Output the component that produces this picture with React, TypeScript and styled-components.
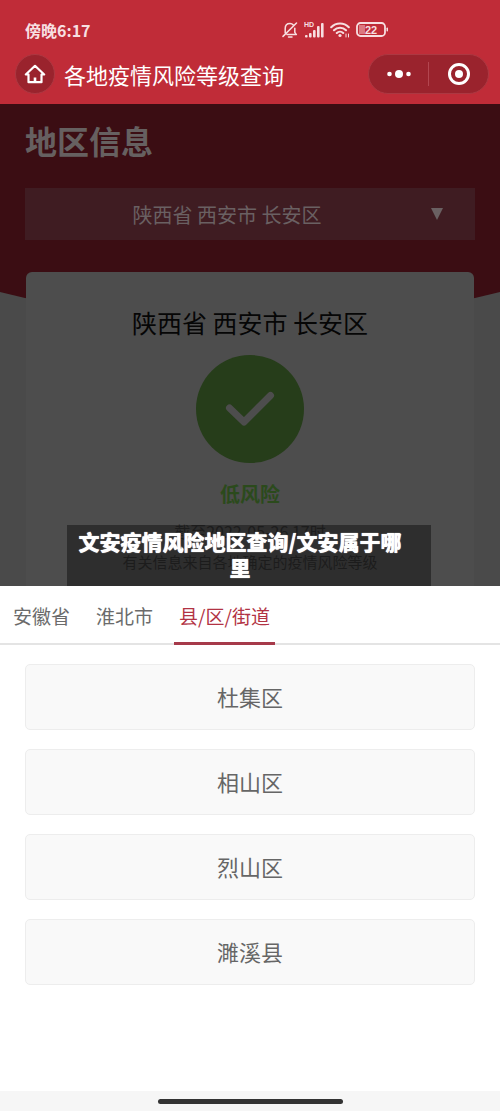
import React, { useState } from "react";
import styled, { createGlobalStyle, css } from "styled-components";

const GlobalStyle = createGlobalStyle`
  *, *::before, *::after { box-sizing: border-box; }
  body {
    margin: 0;
    font-family: "Noto Sans CJK SC", "Noto Sans", sans-serif;
    background: #ffffff;
  }
  h1, h2, p { margin: 0; font-weight: 400; }
  button, select { font-family: inherit; border: 0; padding: 0; cursor: pointer; }
  svg { display: block; flex: none; }
`;

const Page = styled.div`
  display: flex;
  flex-direction: column;
  min-height: 100vh;
`;

const Header = styled.header`
  background: #c02c38;
  color: #ffffff;
  padding: 16px 11px 10px 15px;
  display: flex;
  flex-direction: column;
  gap: 10px;
`;

const StatusBar = styled.div`
  display: flex;
  align-items: center;
  height: 28px;
  padding-left: 10px;
  padding-right: 100px;
  color: #f7dfe1;
`;

const Clock = styled.span`
  flex: 1;
  font-size: 16px;
  font-weight: 700;
  line-height: 28px;
`;

const StatusIcons = styled.div`
  display: flex;
  align-items: center;
  gap: 6px;
`;

const NavBar = styled.div`
  display: flex;
  align-items: center;
  height: 40px;
`;

const round = css`
  background: #9a232d;
  border: 1px solid #ac3842;
  color: #ffffff;
`;

const HomeButton = styled.button`
  ${round}
  width: 40px;
  height: 40px;
  border-radius: 50%;
  display: grid;
  place-items: center;
`;

const NavTitle = styled.h1`
  flex: 1;
  padding-left: 9px;
  font-size: 22px;
  line-height: 38px;
`;

const Capsule = styled.div`
  ${round}
  display: flex;
  align-items: center;
  width: 121px;
  height: 40px;
  border-radius: 20px;
`;

const CapsuleButton = styled.button`
  flex: 1;
  height: 38px;
  background: transparent;
  color: inherit;
  display: grid;
  place-items: center;
`;

const CapsuleDivider = styled.span`
  width: 1px;
  height: 24px;
  background: #b34650;
`;

const Region = styled.section`
  position: relative;
  isolation: isolate;
  background: #4a4a4a;
  padding: 14px 25px 0;
  overflow: hidden;

  &::before {
    content: "";
    position: absolute;
    z-index: -1;
    inset: 0 0 auto;
    height: 210px;
    background: #3b0d13;
    clip-path: polygon(0 0, 100% 0, 100% 188px, 95% 194px, 75% 206px, 25% 206px, 5% 194px, 0 188px);
  }
`;

const RegionTitle = styled.h2`
  font-size: 32px;
  font-weight: 700;
  line-height: 44px;
  color: #666060;
`;

const Picker = styled.label`
  display: grid;
  align-items: center;
  margin-top: 26px;
  background: #3f1c22;
  color: #6a6062;

  & > * {
    grid-area: 1 / 1;
  }
  & > svg {
    justify-self: end;
    margin-right: 32px;
    pointer-events: none;
  }
`;

const PickerSelect = styled.select`
  appearance: none;
  width: 100%;
  height: 52px;
  padding-right: 46px;
  background: transparent;
  color: inherit;
  font-size: 20px;
  text-align: center;
  text-align-last: center;
`;

const RiskCard = styled.article`
  display: flex;
  flex-direction: column;
  align-items: center;
  margin: 32px 1px 0;
  padding: 31px 16px 12px;
  border-radius: 6px 6px 0 0;
  background: #4d4d4d;
`;

const Place = styled.h2`
  font-size: 25px;
  line-height: 38px;
  color: #060606;
`;

const RiskBadge = styled.div`
  display: grid;
  place-items: center;
  width: 108px;
  height: 108px;
  margin: 14px 0 16px;
  border-radius: 50%;
  background: #263d1a;
`;

const RiskLevel = styled.p`
  font-size: 20px;
  font-weight: 700;
  line-height: 30px;
  color: #2b4a1c;
`;

const Note = styled.p<{ $size: number }>`
  font-size: ${(p) => p.$size}px;
  line-height: 24px;
  color: #303030;
  & + & { margin-top: 7px; }
`;

const Notes = styled.div`
  margin-top: 10px;
  text-align: center;
`;

const Caption = styled.p`
  position: absolute;
  left: 67px;
  right: 69px;
  bottom: 0;
  padding: 3px 23px 6px 5px;
  background: rgba(0, 0, 0, 0.4);
  color: #ffffff;
  font-size: 21px;
  font-weight: 900;
  line-height: 26px;
  text-align: center;
  text-shadow: 0 0 1px #ffffff;
`;

const Sheet = styled.section`
  flex: 1;
  display: flex;
  flex-direction: column;
  background: #ffffff;
`;

const Tabs = styled.div`
  display: flex;
  gap: 16px;
  height: 59px;
  padding-left: 8px;
  border-bottom: 2px solid #e4e4e4;
`;

const Tab = styled.button<{ $active: boolean }>`
  height: 59px;
  padding: 3px 5px 0;
  background: transparent;
  border-bottom: 3px solid ${(p) => (p.$active ? "#a63a4a" : "transparent")};
  color: ${(p) => (p.$active ? "#b23344" : "#6b6b6b")};
  font-size: 19px;
  line-height: 28px;
`;

const Districts = styled.div`
  flex: 1;
  display: flex;
  flex-direction: column;
  gap: 19px;
  padding: 19px 25px 24px;
`;

const District = styled.button`
  height: 66px;
  padding-bottom: 3px;
  border: 1px solid #ededed;
  border-radius: 5px;
  background: #f9f9f9;
  color: #666666;
  font-size: 22px;
`;

const HomeIndicator = styled.footer`
  display: flex;
  justify-content: center;
  align-items: center;
  height: 20px;
  background: #f6f6f6;

  &::before {
    content: "";
    width: 37%;
    height: 5px;
    border-radius: 3px;
    background: #333333;
  }
`;

const MutedBell = () => (
  <svg width="16" height="16" viewBox="0 0 16 16" fill="none" stroke="currentColor" strokeWidth="1.5" strokeLinecap="round" strokeLinejoin="round">
    <path d="M5 12.600h9.400l-1.600-2.200V6.200M3.200 11V6.600c0-3 2-5 4.800-5 1.400 0 2.500.5 3.300 1.400M6.500 15h3.500M1 14.400L14.500 1" />
  </svg>
);

const Signal = () => (
  <svg width="20" height="18" viewBox="0 0 20 18" fill="currentColor">
    <text x="0" y="6" fontSize="7" fontWeight="700" fontFamily="Liberation Sans, sans-serif">HD</text>
    <rect x="1" y="14" width="2.600" height="2.500" rx="1" />
    <rect x="5" y="12" width="2.600" height="4.500" rx="1" />
    <rect x="9" y="9" width="2.600" height="7.500" rx="1" />
    <rect x="13" y="5" width="2.600" height="11.500" rx="1" />
    <rect x="17" y="2" width="2.600" height="14.500" rx="1" />
  </svg>
);

const Wifi = () => (
  <svg width="20" height="16" viewBox="0 0 20 16" fill="none" stroke="currentColor" strokeWidth="2.100" strokeLinecap="round">
    <path d="M1.200 5.200c4.900-4.900 12.700-4.900 17.600 0M4 8.200c3.300-3.300 8.700-3.300 12 0M6.800 11c1.800-1.700 4.600-1.700 6.400 0" />
    <circle cx="10" cy="13.500" r="1.600" fill="currentColor" stroke="none" />
    <path d="M16 12v3M18.500 12v3" strokeWidth="1" />
  </svg>
);

const Battery = () => (
  <svg width="33" height="16" viewBox="0 0 33 16" fill="none">
    <rect x="3" y="3" width="6" height="9" fill="#dc7880" />
    <rect x="1" y="1" width="28" height="13" rx="3.500" stroke="currentColor" strokeWidth="1.800" />
    <rect x="30.500" y="5.500" width="1.500" height="4" rx=".7" fill="currentColor" />
    <text x="15" y="11.500" textAnchor="middle" fontSize="11" fontWeight="700" fill="currentColor" fontFamily="Liberation Sans, sans-serif">22</text>
  </svg>
);

const HomeIcon = () => (
  <svg width="22" height="20" viewBox="0 0 22 20" fill="none" stroke="currentColor" strokeWidth="2.200" strokeLinejoin="round" strokeLinecap="round">
    <path d="M4.500 10.500H1.800L11 1.800 20.200 10.500H17.500V18.200H4.500Z" />
    <path d="M11 13.500v4.500" strokeLinecap="butt" strokeWidth="2.600" />
  </svg>
);

const place = "陕西省 西安市 长安区";
const tabs = ["安徽省", "淮北市", "县/区/街道"];
const districts = ["杜集区", "相山区", "烈山区", "濉溪县"];

export default function App() {
  const [active, setActive] = useState(2);
  return (
    <Page>
      <GlobalStyle />
      <Header>
        <StatusBar>
          <Clock>傍晚6:17</Clock>
          <StatusIcons>
            <MutedBell />
            <Signal />
            <Wifi />
            <Battery />
          </StatusIcons>
        </StatusBar>
        <NavBar>
          <HomeButton aria-label="首页"><HomeIcon /></HomeButton>
          <NavTitle>各地疫情风险等级查询</NavTitle>
          <Capsule>
            <CapsuleButton aria-label="更多">
              <svg width="26" height="10" viewBox="0 0 26 10" fill="currentColor">
                <circle cx="3.500" cy="5" r="2.300" />
                <circle cx="13" cy="5" r="4" />
                <circle cx="22.500" cy="5" r="2.300" />
              </svg>
            </CapsuleButton>
            <CapsuleDivider />
            <CapsuleButton aria-label="关闭">
              <svg width="24" height="24" viewBox="0 0 24 24" fill="none">
                <circle cx="12" cy="12" r="9.500" stroke="currentColor" strokeWidth="3" />
                <circle cx="12" cy="12" r="4" fill="currentColor" />
              </svg>
            </CapsuleButton>
          </Capsule>
        </NavBar>
      </Header>

      <Region>
        <RegionTitle>地区信息</RegionTitle>
        <Picker>
          <PickerSelect aria-label="选择地区" defaultValue={place}>
            <option>{place}</option>
          </PickerSelect>
          <svg width="12" height="12" viewBox="0 0 12 12" fill="currentColor">
            <path d="M0 0h12L6 12Z" />
          </svg>
        </Picker>
        <RiskCard>
          <Place>{place}</Place>
          <RiskBadge>
            <svg width="50" height="36" viewBox="0 0 50 36" fill="none" stroke="#4d4d4d" strokeWidth="7" strokeLinecap="round" strokeLinejoin="round">
              <path d="M4.500 17L19 31 45.500 4.500" />
            </svg>
          </RiskBadge>
          <RiskLevel>低风险</RiskLevel>
          <Notes>
            <Note $size={16}>截至2022-05-26 17时</Note>
            <Note $size={15}>有关信息来自各地确定的疫情风险等级</Note>
          </Notes>
        </RiskCard>
        <Caption>文安疫情风险地区查询/文安属于哪里</Caption>
      </Region>

      <Sheet>
        <Tabs role="tablist">
          {tabs.map((label, i) => (
            <Tab key={label} role="tab" aria-selected={i === active} $active={i === active} onClick={() => setActive(i)}>
              {label}
            </Tab>
          ))}
        </Tabs>
        <Districts>
          {districts.map((name) => (
            <District key={name}>{name}</District>
          ))}
        </Districts>
        <HomeIndicator />
      </Sheet>
    </Page>
  );
}
